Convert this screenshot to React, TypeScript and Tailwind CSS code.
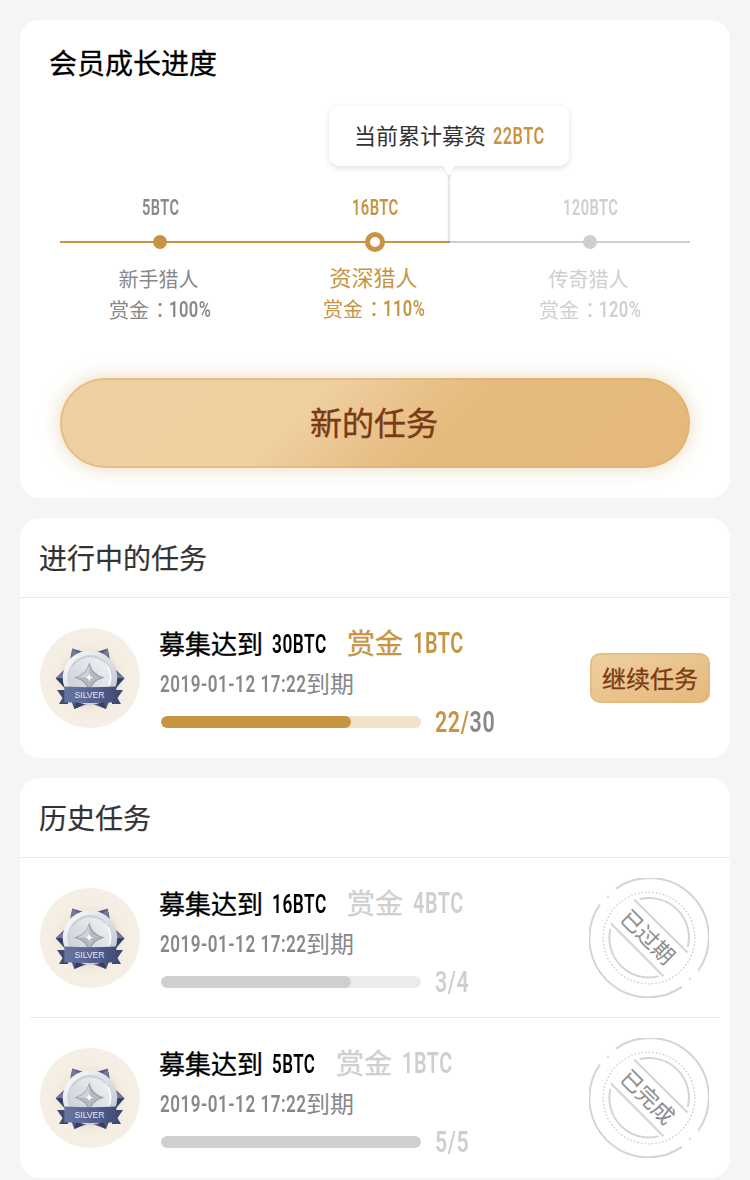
import { useLayoutEffect, useRef, useState } from "react";

const NUM_FONT = "font-['Roboto','Liberation_Sans',sans-serif]";

/** Condensed latin text, squeezed horizontally to the given width. */
function Num({ text, width, className = "", rest }: { text: string; width: number; className?: string; rest?: string }) {
  const ref = useRef<HTMLSpanElement>(null);
  const [scale, setScale] = useState(0.64);
  useLayoutEffect(() => {
    if (ref.current) setScale((width + 0.5) / ref.current.offsetWidth);
  }, [width, text]);
  return (
    <span className={`inline-flex shrink-0 whitespace-nowrap font-semibold leading-none ${NUM_FONT} ${className}`} style={{ width }}>
      <span ref={ref} className="inline-block shrink-0 origin-left tracking-[0.03em]" style={{ transform: `scaleX(${scale})` }}>
        {text}
        {rest && <span className="text-[#888]">{rest}</span>}
      </span>
    </span>
  );
}

function Medal() {
  return (
    <svg className="size-[100px] shrink-0" viewBox="0 0 100 100">
      <defs>
        <radialGradient id="halo">
          <stop offset="0.6" stopColor="#e8d9c2" />
          <stop offset="1" stopColor="#f5eee4" stopOpacity="0" />
        </radialGradient>
        <linearGradient id="disc" x1="0" y1="0" x2="1" y2="1">
          <stop offset="0" stopColor="#ffffff" />
          <stop offset="0.5" stopColor="#dcdfe5" />
          <stop offset="1" stopColor="#bcc1cc" />
        </linearGradient>
        <linearGradient id="inner" x1="1" y1="0" x2="0" y2="1">
          <stop offset="0" stopColor="#f2f4f7" />
          <stop offset="1" stopColor="#c6cbd4" />
        </linearGradient>
        <linearGradient id="band" x1="0" y1="0" x2="1" y2="0">
          <stop offset="0" stopColor="#6674a3" />
          <stop offset="0.3" stopColor="#5d6a9b" />
          <stop offset="1" stopColor="#434f78" />
        </linearGradient>
      </defs>
      <circle cx="50" cy="50" r="50" fill="#f5eee4" />
      <circle cx="50" cy="51" r="38" fill="url(#halo)" />
      <path d="M32.3 20.5 50 26 67.7 20.5 71 37 84.5 50.3 73 64 66 81 50 75 34.3 81 28 64 15.7 50.3 29 37Z" fill="#4d577c" />
      <path d="M32.3 20.5 30.5 34 39 25ZM67.7 20.5 62 26 69 33ZM84.5 50.3 74 42V50.3ZM15.7 50.3H26V42Z" fill="#707a9b" />
      <path d="M84.5 50.3H74V60ZM15.7 50.3H26V60ZM34.3 81 37 71 44 76ZM66 81 63 72 57 76Z" fill="#353f62" />
      <path d="M17 62H28V76H19L22.5 70ZM83 62H72V76H81L77.500 70Z" fill="#3f4a70" />
      <circle cx="50" cy="49.600" r="27.300" fill="url(#disc)" />
      <circle cx="50" cy="49.600" r="22" fill="url(#inner)" stroke="#c9cdd5" strokeWidth="1" />
      <path d="M32 39A21 21 0 0 1 65 35" fill="none" stroke="#9fa6b3" strokeWidth="0.8" opacity="0.6" />
      <path d="M68 39A21 21 0 0 1 69 57" fill="none" stroke="#fff" strokeWidth="1.5" />
      <path d="M49.300 36.500Q52 46.500 62.500 49.500Q52 52.500 49.300 62.500Q46.500 52.500 36 49.500Q46.500 46.500 49.300 36.500Z" fill="#b6babf" stroke="#9a9fa5" strokeWidth="1.3" />
      <path d="M49.300 36.500V49.500H36Q46.500 46.500 49.300 36.500Z" fill="#cfd2d6" />
      <path d="M49.300 45.500 50.400 48.400 53.300 49.500 50.400 50.600 49.300 53.500 48.200 50.600 45.300 49.500 48.200 48.400Z" fill="#fff" />
      <path d="M24.300 58.500Q50 60 76.300 58.500V74.300Q50 75.800 24.300 74.300Z" fill="url(#band)" />
      <text x="49.500" y="69.700" textAnchor="middle" textLength="30" fontSize="8.600" fill="#e6e9f3" className="font-['Liberation_Sans',sans-serif]">
        SILVER
      </text>
    </svg>
  );
}

function Stamp({ label }: { label: string }) {
  return (
    <svg className="mr-px size-[120px] shrink-0" viewBox="0 0 120 120" fill="none" stroke="#d4d4d4" strokeWidth="2">
      <path d="M27 10.600A59 59 0 0 1 109.200 92.700M92.800 108.900A59 59 0 0 1 11 26.500" />
      <circle cx="60" cy="60" r="45.800" strokeWidth="1.800" strokeDasharray="0.010 3.590" strokeLinecap="round" />
      <path d="M50.700 21.300A39.500 39.500 0 0 1 98.700 69.300M69.500 98.300A39.500 39.500 0 0 1 21.500 50.700" />
      <path d="M45.300 21.700 98.500 74.500M21.700 45.300 74.500 98.300" />
      <circle cx="19" cy="18.800" r="1" fill="#d2d2d2" stroke="none" />
      <circle cx="101" cy="100.700" r="1" fill="#d2d2d2" stroke="none" />
      <text x="58.500" y="68.300" transform="rotate(45 60 60)" textAnchor="middle" fontSize="22" fill="#8c8c8c" stroke="none">
        {label}
      </text>
    </svg>
  );
}

type Level = { amount: string; amountW: number; name: string; rate: string; rateW: number; state: "done" | "current" | "locked" };

const levels: Level[] = [
  { amount: "5BTC", amountW: 37, name: "新手猎人", rate: "100%", rateW: 42, state: "done" },
  { amount: "16BTC", amountW: 46, name: "资深猎人", rate: "110%", rateW: 42, state: "current" },
  { amount: "120BTC", amountW: 55, name: "传奇猎人", rate: "120%", rateW: 42, state: "locked" },
];

const tone = { done: "text-[#888]", current: "text-[#c79443]", locked: "text-[#cfcfcf]" };
const dot = {
  done: "size-3.5 bg-[#c79443]",
  current: "size-5 border-[5px] border-[#c79443] bg-white",
  locked: "size-3.5 bg-[#cfcfcf]",
};

function LevelColumn({ level }: { level: Level }) {
  const current = level.state === "current";
  return (
    <div className={`flex flex-col items-center ${tone[level.state]}`}>
      <Num text={level.amount} width={level.amountW} className="h-6 items-center text-[22.5px]" />
      <span className="relative mt-[13px] flex h-5 items-center">
        <span className={`rounded-full ${dot[level.state]}`} />
      </span>
      <span className={`mr-[3px] h-[30px] leading-[30px] ${current ? "mt-[9px] text-[22px]" : "mt-3 text-[20px]"}`}>{level.name}</span>
      <span className={`flex h-[30px] items-center text-[20px] leading-[30px] ${current ? "mr-0.5 mt-[3px]" : "mt-px"}`}>
        <span>
          赏金<span className="inline-block translate-x-px font-['Noto_Sans_CJK_TC',sans-serif]">：</span>
        </span>
        <Num text={level.rate} width={level.rateW} className="-mt-px text-[22.5px]" />
      </span>
    </div>
  );
}

type Task = {
  goal: string;
  goalW: number;
  bounty: string;
  bountyW: number;
  current: string;
  total: string;
  countW: number;
  percent: number;
  stamp?: string;
};

function TaskRow({ task }: { task: Task }) {
  const active = !task.stamp;
  return (
    <div className="flex h-40 items-center px-5">
      <Medal />
      <div className="ml-5 flex flex-1 flex-col pt-[7px]">
        <div className="flex h-10 items-center">
          <span className="-ml-px -mt-0.5 text-[26px] leading-10 text-black [-webkit-text-stroke:0.35px_currentColor]">募集达到</span>
          <Num text={task.goal} width={task.goalW} className="ml-[9px] text-[26px] text-black" />
          <span className={`ml-[21px] flex items-center text-[28px] leading-10 ${active ? "text-[#c79443]" : "text-[#cfcfcf]"}`}>
            <span className="-mt-[3px] [-webkit-text-stroke:0.35px_currentColor]">赏金</span>
            <Num text={task.bounty} width={task.bountyW} className="ml-2.5 text-[29px]" />
          </span>
        </div>
        <div className="flex h-10 items-center text-[24px] leading-10 text-[#888]">
          <Num text="2019-01-12 17:22" width={146} className="font-medium" />
          <span className="-mt-0.5">到期</span>
        </div>
        <div className="flex h-9 items-center">
          <div className={`ml-px mt-px h-3 w-[260px] overflow-hidden rounded-full ${active ? "bg-[#f1e2c8]" : "bg-[#ebebeb]"}`}>
            <div className={`h-full rounded-full ${active ? "bg-[#c79443]" : "bg-[#cfcfcf]"}`} style={{ width: `${task.percent}%` }} />
          </div>
          <Num
            text={active ? `${task.current}/` : `${task.current}/${task.total}`}
            rest={active ? task.total : undefined}
            width={task.countW}
            className={`ml-3.5 mt-px text-[29px] ${active ? "text-[#c79443]" : "text-[#cfcfcf]"}`}
          />
        </div>
      </div>
      {task.stamp ? (
        <Stamp label={task.stamp} />
      ) : (
        <button className="h-[50px] w-[120px] shrink-0 rounded-[10px] border-2 border-[#e3b575]/60 bg-linear-to-br from-[#efd0a2] to-[#e5b87a] bg-origin-border text-[24px] leading-none text-[#7a3a14] [-webkit-text-stroke:0.3px_currentColor]">
          继续任务
        </button>
      )}
    </div>
  );
}

const ongoing: Task = { goal: "30BTC", goalW: 54, bounty: "1BTC", bountyW: 50, current: "22", total: "30", countW: 60, percent: 73.1 };
const history: Task[] = [
  { goal: "16BTC", goalW: 54, bounty: "4BTC", bountyW: 50, current: "3", total: "4", countW: 34, percent: 73.1, stamp: "已过期" },
  { goal: "5BTC", goalW: 43, bounty: "1BTC", bountyW: 50, current: "5", total: "5", countW: 34, percent: 100, stamp: "已完成" },
];

export default function App() {
  return (
    <main className="flex h-[1180px] w-[750px] flex-col gap-5 overflow-hidden bg-[#f4f5f7] px-5 pt-5 font-['Noto_Sans_CJK_SC',sans-serif]">
      <section className="h-[478px] shrink-0 rounded-[20px] bg-white">
        <h1 className="ml-[29px] pt-[22px] text-[28px] leading-10 text-black [-webkit-text-stroke:0.3px_currentColor]">会员成长进度</h1>
        <div className="relative mt-[113px]">
          <div className="absolute left-10 top-[46px] flex h-0.5 w-[630px] bg-[#cfcfcf]">
            <div className="w-[390px] bg-[#c79443]" />
          </div>
          <div className="absolute left-[428px] top-[-22px] h-[68px] w-0.5 bg-[#e9e9e9] shadow-[0_0_2px_rgba(0,0,0,0.08)]" />
          <div className="absolute left-[309px] top-[-89px] flex h-[60px] w-[240px] items-center rounded-[10px] bg-white pl-[25px] text-[22px] text-[#333] shadow-[0_2px_6px_rgba(0,0,0,0.12)]">
            <span className="pb-[3px]">当前累计募资</span>
            <Num text="22BTC" width={51} className="ml-[7px] text-[24px] text-[#c79443]" />
            <svg className="absolute left-[114px] top-[59px] h-[11px] w-3 drop-shadow-[0_2px_1px_rgba(0,0,0,0.08)]" viewBox="0 0 12 11">
              <path d="M0 0H12Q8.500 9 6 10.500Q3.500 9 0 0Z" fill="#fff" />
            </svg>
          </div>
          <div className="ml-[32.5px] grid w-[645px] grid-cols-3">
            {levels.map((level) => (
              <LevelColumn key={level.name} level={level} />
            ))}
          </div>
        </div>
        <button className="ml-10 mt-[53px] h-[90px] w-[630px] rounded-full border-2 border-[#dfae68]/50 bg-[linear-gradient(135deg,#efd0a2_0%,#eecfa0_39%,#edc998_44%,#e5bb7e_60%,#e5b97c_100%)] bg-origin-border pb-1 pr-0.5 text-[32px] leading-none text-[#7a3a14] shadow-[0_0_20px_rgba(199,148,67,0.35)] [-webkit-text-stroke:0.4px_currentColor]">
          新的任务
        </button>
      </section>

      <section className="h-60 shrink-0 rounded-[20px] bg-white">
        <h2 className="h-20 border-b border-[#ebebeb] pl-[19px] text-[28px] leading-[79px] text-[#333] [-webkit-text-stroke:0.2px_currentColor]">进行中的任务</h2>
        <TaskRow task={ongoing} />
      </section>

      <section className="h-[400px] shrink-0 rounded-[20px] bg-white">
        <h2 className="h-20 border-b border-[#ebebeb] pl-[19px] text-[28px] leading-[79px] text-[#333] [-webkit-text-stroke:0.2px_currentColor]">历史任务</h2>
        <TaskRow task={history[0]} />
        <div className="mx-2.5 -mt-px h-px bg-[#ebebeb]" />
        <TaskRow task={history[1]} />
      </section>
    </main>
  );
}
